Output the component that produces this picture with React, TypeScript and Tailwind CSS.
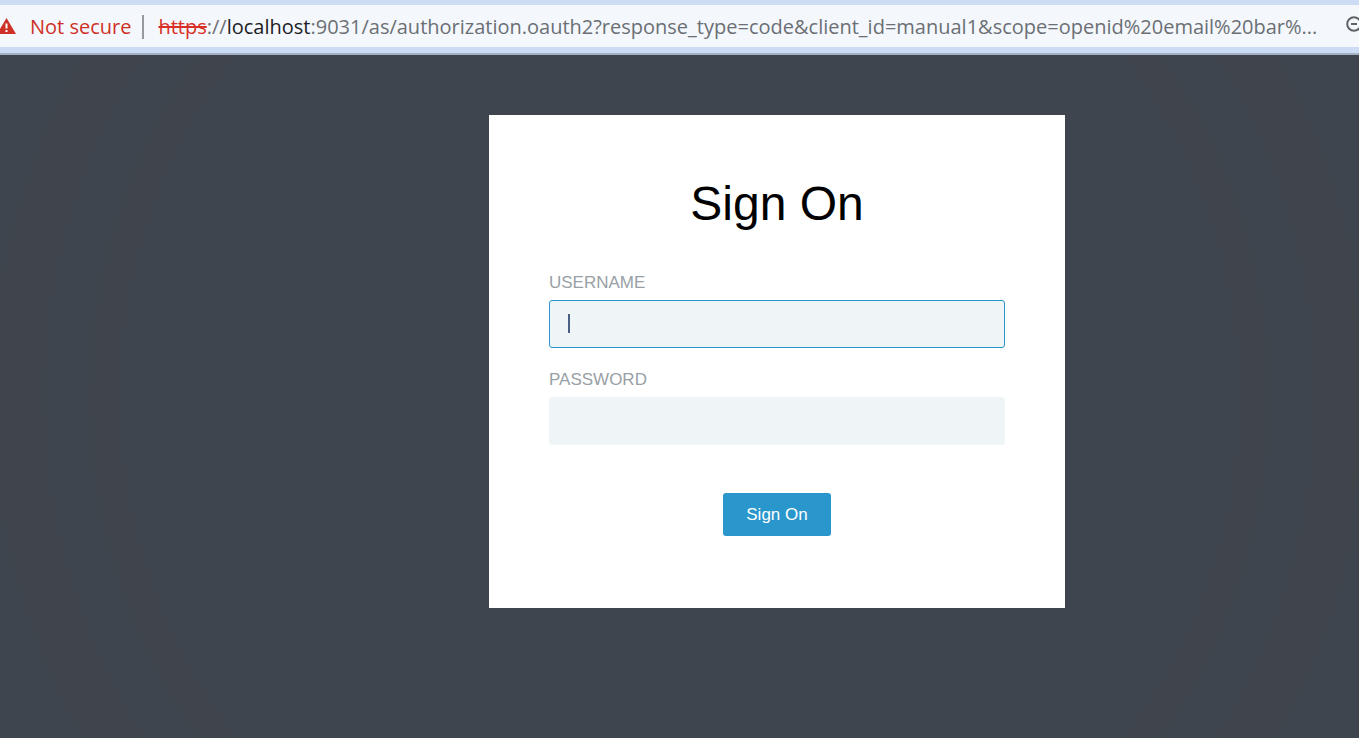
const fieldClass =
  "h-12 w-full rounded-[3px] border border-[#eff4f7] bg-[#eff4f7] px-[18px] text-[17px] text-[#4a5f86] caret-transparent outline-none";
const labelClass = "text-[17px] leading-5 text-[#989fa5]";

function AddressBar() {
  return (
    <header className="border-b-2 border-[#a3afc4] bg-[#ccdcf5] pb-[6px] pt-[5px] font-['Open_Sans','Noto_Sans',sans-serif]">
      <div className="flex h-[42px] items-center justify-between overflow-hidden bg-[#f4f8fd]">
        <div className="flex items-center whitespace-nowrap pt-[2px] text-[20px] leading-7 text-[#6b6f74]">
          <svg className="-ml-1 h-5 w-5" viewBox="0 0 20 20" aria-hidden="true">
            <path d="M10.500 1 20 17H1Z" fill="#cf3026" />
            <path d="M9.500 6.500h2v5h-2zM9.500 13h2v2h-2z" fill="#fff" />
          </svg>
          <span className="ml-[14px] text-[#cf3026]">Not secure</span>
          <span className="ml-[11px] mr-[14px] h-6 w-[2px] bg-[#96999d]" />
          <p>
            <s className="text-[#d93025]">https</s>://
            <span className="text-[#202124]">localhost</span>
            :9031/as/authorization.oauth2?response_type=code&amp;client_id=manual1&amp;scope=openid%20email%20bar%...
          </p>
        </div>
        <svg className="-mr-1 mb-1 h-[17px] w-[17px] shrink-0" viewBox="0 0 17 17" fill="none" stroke="#5f6368" strokeWidth="2" aria-hidden="true">
          <circle cx="8" cy="8" r="6.800" />
          <path d="M5 8h6M13 13l4 4" />
        </svg>
      </div>
    </header>
  );
}

export default function App() {
  return (
    <div className="flex min-h-screen flex-col bg-[#3f454e] font-['Liberation_Sans',Arial,sans-serif]">
      <AddressBar />
      <main className="flex flex-1 justify-center bg-[radial-gradient(circle_at_center,#3f454e_555px,#3f454b_565px,#3f454b_580px,#3f454e_600px,#3f454e_630px,#3f454a_645px,#3f454a_675px,#3f454f_700px)] pl-[195px] pt-[60px]">
        <form className="flex h-fit w-[576px] flex-col bg-white px-[60px] pb-[72px] pt-[60px]" onSubmit={(event) => event.preventDefault()}>
          <h1 className="text-center text-[48px] leading-[58px] text-black">Sign On</h1>
          <div className="mt-10 flex flex-col gap-[7px]">
            <label htmlFor="username" className={labelClass}>USERNAME</label>
            <div className="relative">
              <input id="username" name="username" type="text" autoComplete="off" className={`${fieldClass} border-[#2996cc]!`} />
              <span className="pointer-events-none absolute left-[19px] top-[14px] h-[19px] w-[2px] bg-[#4a5f86]" />
            </div>
          </div>
          <div className="mt-[22px] flex flex-col gap-[7px]">
            <label htmlFor="password" className={labelClass}>PASSWORD</label>
            <input id="password" name="password" type="password" className={fieldClass} />
          </div>
          <button type="submit" className="mt-12 h-[43px] w-[108px] self-center rounded-[3px] bg-[#2996cc] text-[17px] text-white">
            Sign On
          </button>
        </form>
      </main>
    </div>
  );
}
